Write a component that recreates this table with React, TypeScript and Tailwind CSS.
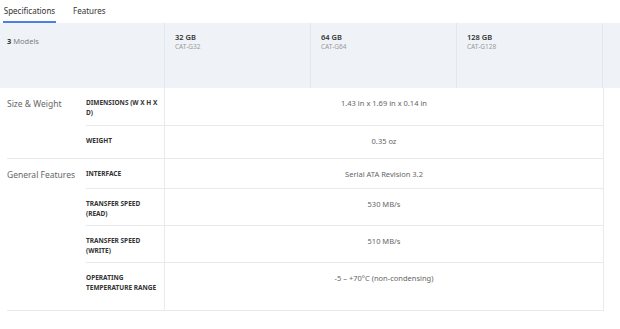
import React from "react";

const font = { fontFamily: '"Noto Sans", "Open Sans", sans-serif' };

type Row = { label: string; value: string; h: string };

const sections: { title: string; rows: Row[] }[] = [
  {
    title: "Size & Weight",
    rows: [
      { label: "DIMENSIONS (W X H X D)", value: "1.43 in x 1.69 in x 0.14 in", h: "h-[38px]" },
      { label: "WEIGHT", value: "0.35 oz", h: "h-[32px]" },
    ],
  },
  {
    title: "General Features",
    rows: [
      { label: "INTERFACE", value: "Serial ATA Revision 3.2", h: "h-[30px]" },
      { label: "TRANSFER SPEED (READ)", value: "530 MB/s", h: "h-[37px]" },
      { label: "TRANSFER SPEED (WRITE)", value: "510 MB/s", h: "h-[37px]" },
      { label: "OPERATING TEMPERATURE RANGE", value: "-5 – +70°C (non-condensing)", h: "h-[47px]" },
    ],
  },
];

const models = [
  { name: "32 GB", code: "CAT-G32" },
  { name: "64 GB", code: "CAT-G64" },
  { name: "128 GB", code: "CAT-G128" },
];

export default function App() {
  return (
    <div className="w-[620px] h-[329px] bg-white overflow-hidden" style={font}>
      {/* Tabs */}
      <div className="flex h-[23px] items-stretch">
        <div className="ml-[3px] w-[53px] flex items-center justify-center border-b-[2px] border-[#4a80e3] text-[8px] text-[#333] pt-[1px]">
          Specifications
        </div>
        <div className="ml-[17px] flex items-center text-[8px] text-[#333] pb-[1px]">Features</div>
      </div>

      {/* Header */}
      <div className="flex h-[65px] bg-[#eff2f7]">
        <div className="w-[164px] pl-[7px] pt-[13px] text-[7.5px] text-[#808080] leading-[10px]">
          <span className="font-bold text-[#333]">3</span> Models
        </div>
        {models.map((m) => (
          <div key={m.code} className="w-[146px] border-l border-[#e3e6eb] pl-[10px] pt-[9px]">
            <div className="text-[7.5px] font-semibold text-[#333] leading-[10px]">{m.name}</div>
            <div className="text-[6.5px] text-[#999] leading-[10px]">{m.code}</div>
          </div>
        ))}
        <div className="w-[1px] bg-[#e3e6eb]" />
      </div>

      {/* Body */}
      <div className="ml-[7px] w-[597px]">
        {sections.map((s) => (
          <div key={s.title} className="flex border-b border-[#e8eaee]">
            <div className="w-[79px] pt-[10px] text-[8.5px] text-[#666] leading-[12px]">{s.title}</div>
            <div className="flex-1">
              {s.rows.map((r, i) => (
                <div
                  key={r.label}
                  className={`flex ${r.h} ${i < s.rows.length - 1 ? "border-b border-[#e8eaee]" : ""}`}
                >
                  <div className="w-[78px] pr-[4px] pt-[10px] text-[6.5px] font-bold text-[#333] leading-[10px]">
                    {r.label}
                  </div>
                  <div className="flex-1 border-l border-r border-[#e8eaee] pt-[10px] text-center text-[7.5px] text-[#666] leading-[10px]">
                    {r.value}
                  </div>
                </div>
              ))}
            </div>
          </div>
        ))}
      </div>
    </div>
  );
}
